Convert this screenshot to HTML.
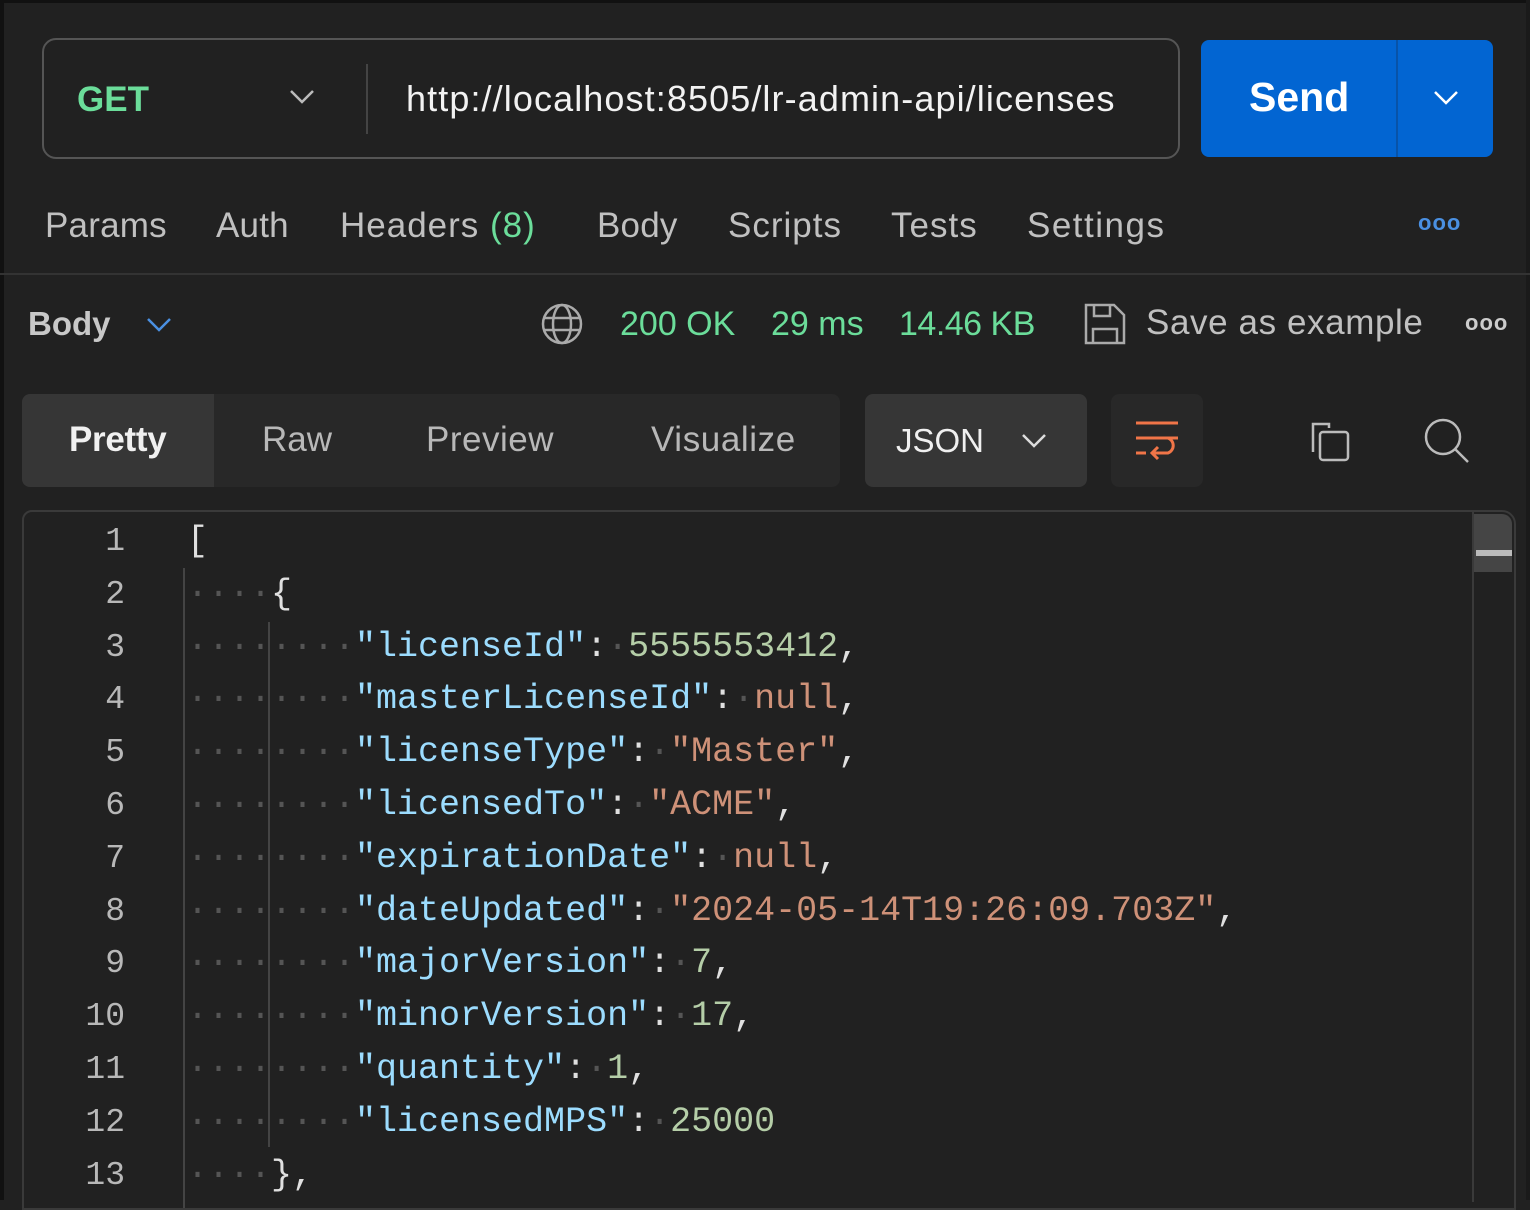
<!DOCTYPE html>
<html><head><style>
*{margin:0;padding:0;box-sizing:border-box}
body{width:1530px;height:1200px;background:#212121;overflow:hidden;position:relative;font-family:"Liberation Sans",sans-serif;color:#c8c8c8}
.a{position:absolute;white-space:pre}
.t{font-size:35px;top:206px;color:#c0c0c0;letter-spacing:0.2px}
.ln{position:absolute;left:40px;width:85px;text-align:right;color:#b8b8b8;font-family:"Liberation Mono",monospace;font-size:33px}
.cl{position:absolute;left:187px;color:#e0e0e0;font-family:"Liberation Mono",monospace;font-size:35px;white-space:pre}
.d{color:#555}.k{color:#9cdcfe}.n{color:#b5cea8}.s{color:#ce9178}
</style></head><body>
<div class="a" style="left:0;top:0;width:4px;height:1200px;background:#111"></div>
<div class="a" style="left:0;top:0;width:1530px;height:3px;background:#111"></div>
<div class="a" style="left:1526px;top:0;width:4px;height:1200px;background:#1a1a1a"></div>
<div class="a" style="left:42px;top:38px;width:1138px;height:121px;border:2px solid #555;border-radius:14px"></div>
<div class="a" style="left:366px;top:64px;width:2px;height:70px;background:#444"></div>
<div class="a" style="left:77px;top:80px;font-size:35px;font-weight:bold;color:#6bdd9a">GET</div>
<svg class="a" style="left:289px;top:88px" width="26" height="18"><path d="M2 3l11 11 11-11" stroke="#bbb" stroke-width="2.5" fill="none"/></svg>
<div class="a" style="left:406px;top:78px;font-size:36px;color:#f2f2f2;letter-spacing:1.1px">http://localhost:8505/lr-admin-api/licenses</div>
<div class="a" style="left:1201px;top:40px;width:292px;height:117px;background:#0265d2;border-radius:8px"></div>
<div class="a" style="left:1396px;top:40px;width:2px;height:117px;background:#0853a8"></div>
<div class="a" style="left:1249px;top:74px;font-size:41px;font-weight:bold;color:#fff">Send</div>
<svg class="a" style="left:1432px;top:89px" width="28" height="18"><path d="M3 3l11 11 11-11" stroke="#fff" stroke-width="2.5" fill="none"/></svg>
<div class="a t" style="left:45px">Params</div>
<div class="a t" style="left:216px">Auth</div>
<div class="a t" style="left:340px;letter-spacing:1px">Headers <span style="color:#6bdd9a">(8)</span></div>
<div class="a t" style="left:597px">Body</div>
<div class="a t" style="left:728px;letter-spacing:1px">Scripts</div>
<div class="a t" style="left:891px;letter-spacing:1px">Tests</div>
<div class="a t" style="left:1027px;letter-spacing:1.5px">Settings</div>
<div class="a" style="left:1418px;top:210px;font-size:22px;color:#4a90e2;letter-spacing:1px;font-weight:bold">ooo</div>
<div class="a" style="left:0;top:273px;width:1530px;height:2px;background:#333"></div>
<div class="a" style="left:28px;top:305px;font-size:33px;font-weight:bold;color:#c8c8c8">Body</div>
<svg class="a" style="left:146px;top:316px" width="26" height="18"><path d="M2 3l11 11 11-11" stroke="#4a90e2" stroke-width="2.5" fill="none"/></svg>
<svg class="a" style="left:540px;top:302px" width="44" height="44" fill="none" stroke="#aaa" stroke-width="2.5"><circle cx="22" cy="22" r="19"/><ellipse cx="22" cy="22" rx="9" ry="19"/><path d="M4 16h36M4 28h36"/></svg>
<div class="a" style="left:620px;top:305px;font-size:34px;color:#6bdd9a">200 OK</div>
<div class="a" style="left:771px;top:305px;font-size:34px;color:#6bdd9a">29 ms</div>
<div class="a" style="left:899px;top:305px;font-size:34px;color:#6bdd9a;letter-spacing:-0.5px">14.46 KB</div>
<svg class="a" style="left:1083px;top:302px" width="44" height="44" fill="none" stroke="#aaa" stroke-width="2.5"><path d="M3 3h28l10 10v28H3z"/><path d="M11 3v11h16V3M10 41V27h24v14"/></svg>
<div class="a" style="left:1146px;top:303px;font-size:35px;color:#c0c0c0;letter-spacing:0.6px">Save as example</div>
<div class="a" style="left:1465px;top:310px;font-size:22px;color:#ccc;font-weight:bold;letter-spacing:1px">ooo</div>
<div class="a" style="left:22px;top:394px;width:818px;height:93px;background:#282828;border-radius:8px"></div>
<div class="a" style="left:22px;top:394px;width:192px;height:93px;background:#363636;border-radius:8px 0 0 8px"></div>
<div class="a" style="left:69px;top:420px;font-size:35px;font-weight:bold;color:#f0f0f0;letter-spacing:-0.3px">Pretty</div>
<div class="a" style="left:262px;top:420px;font-size:35px;color:#b8b8b8">Raw</div>
<div class="a" style="left:426px;top:420px;font-size:35px;color:#b8b8b8;letter-spacing:0.5px">Preview</div>
<div class="a" style="left:651px;top:420px;font-size:35px;color:#b8b8b8;letter-spacing:0.6px">Visualize</div>
<div class="a" style="left:865px;top:394px;width:222px;height:93px;background:#363636;border-radius:8px"></div>
<div class="a" style="left:896px;top:422px;font-size:33px;color:#f0f0f0">JSON</div>
<svg class="a" style="left:1021px;top:432px" width="26" height="18"><path d="M2 3l11 11 11-11" stroke="#ddd" stroke-width="2.5" fill="none"/></svg>
<div class="a" style="left:1111px;top:394px;width:92px;height:93px;background:#282828;border-radius:8px"></div>
<svg class="a" style="left:1134px;top:420px" width="46" height="44" fill="none" stroke="#f07548" stroke-width="3"><path d="M2 3h42M2 18h42M2 33h10M20 33h14a8 8 0 0 0 0-15M24 27l-6 6 6 6"/></svg>
<svg class="a" style="left:1307px;top:418px" width="46" height="46" fill="none" stroke="#bbb" stroke-width="2.5"><path d="M16 6h-10v28"/><path d="M16 6h6v4"/><rect x="13" y="14" width="28" height="28" rx="3"/></svg>
<svg class="a" style="left:1422px;top:416px" width="50" height="50" fill="none" stroke="#bbb" stroke-width="2.5"><circle cx="21" cy="21" r="17"/><path d="M33 33l13 13"/></svg>
<div class="a" style="left:22px;top:510px;width:1494px;height:700px;border:2px solid #3a3a3a;border-radius:10px 14px 0 0"></div>
<div class="a" style="left:1472px;top:512px;width:42px;height:690px;border-left:2px solid #3a3a3a"></div>
<div class="a" style="left:1474px;top:514px;width:38px;height:58px;background:#454545;border-radius:0 10px 0 0"></div>
<div class="a" style="left:1476px;top:550px;width:36px;height:6px;background:#bbb"></div>
<div class="a" style="left:183px;top:568px;width:2px;height:640px;background:#444"></div>
<div class="a" style="left:268px;top:622px;width:2px;height:525px;background:#444"></div>
<div class="ln" style="top:523px">1</div><div class="cl" style="top:521px">[</div>
<div class="ln" style="top:576px">2</div><div class="cl" style="top:574px"><span class="d">····</span>{</div>
<div class="ln" style="top:629px">3</div><div class="cl" style="top:627px"><span class="d">········</span><span class="k">"licenseId"</span>:<span class="d">·</span><span class="n">5555553412</span>,</div>
<div class="ln" style="top:681px">4</div><div class="cl" style="top:679px"><span class="d">········</span><span class="k">"masterLicenseId"</span>:<span class="d">·</span><span class="s">null</span>,</div>
<div class="ln" style="top:734px">5</div><div class="cl" style="top:732px"><span class="d">········</span><span class="k">"licenseType"</span>:<span class="d">·</span><span class="s">"Master"</span>,</div>
<div class="ln" style="top:787px">6</div><div class="cl" style="top:785px"><span class="d">········</span><span class="k">"licensedTo"</span>:<span class="d">·</span><span class="s">"ACME"</span>,</div>
<div class="ln" style="top:840px">7</div><div class="cl" style="top:838px"><span class="d">········</span><span class="k">"expirationDate"</span>:<span class="d">·</span><span class="s">null</span>,</div>
<div class="ln" style="top:893px">8</div><div class="cl" style="top:891px"><span class="d">········</span><span class="k">"dateUpdated"</span>:<span class="d">·</span><span class="s">"2024-05-14T19:26:09.703Z"</span>,</div>
<div class="ln" style="top:945px">9</div><div class="cl" style="top:943px"><span class="d">········</span><span class="k">"majorVersion"</span>:<span class="d">·</span><span class="n">7</span>,</div>
<div class="ln" style="top:998px">10</div><div class="cl" style="top:996px"><span class="d">········</span><span class="k">"minorVersion"</span>:<span class="d">·</span><span class="n">17</span>,</div>
<div class="ln" style="top:1051px">11</div><div class="cl" style="top:1049px"><span class="d">········</span><span class="k">"quantity"</span>:<span class="d">·</span><span class="n">1</span>,</div>
<div class="ln" style="top:1104px">12</div><div class="cl" style="top:1102px"><span class="d">········</span><span class="k">"licensedMPS"</span>:<span class="d">·</span><span class="n">25000</span></div>
<div class="ln" style="top:1157px">13</div><div class="cl" style="top:1155px"><span class="d">····</span>},</div>
</body></html>
